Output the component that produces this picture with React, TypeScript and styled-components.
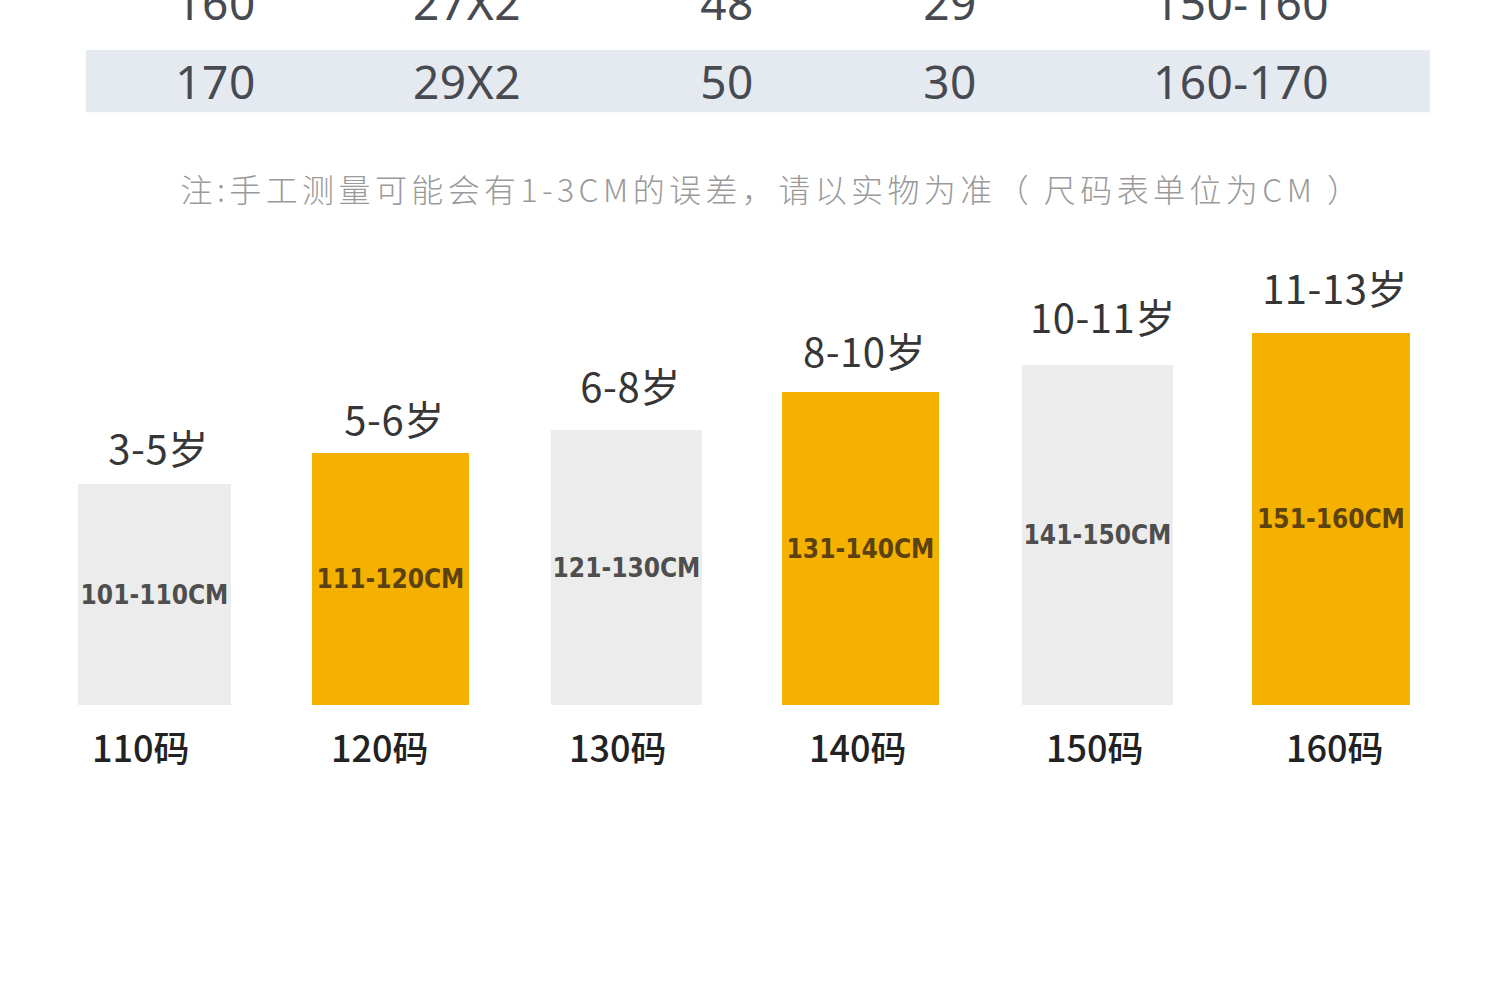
import styled, { createGlobalStyle } from "styled-components";

const GlobalStyle = createGlobalStyle`
  html, body {
    margin: 0;
    padding: 0;
    background: #ffffff;
    overflow: hidden;
  }
`;

const Page = styled.div`
  width: 1500px;
  height: 981px;
  background: #ffffff;
  font-family: "Noto Sans", "Noto Sans CJK SC", sans-serif;
`;

const SizeTable = styled.div`
  display: flex;
  flex-direction: column;
  gap: 17px;
  margin-top: -29px;
  padding: 0 70px 0 86px;
`;

const TableRow = styled.div<{ shaded: boolean }>`
  display: grid;
  grid-template-columns: 259px 244px 276px 170px 412px;
  height: 62px;
  background: ${(props) => (props.shaded ? "#e5e9f0" : "transparent")};
  box-shadow: ${(props) =>
    props.shaded ? "0 3px 4px -2px rgba(0, 0, 0, 0.04)" : "none"};
`;

const Cell = styled.span`
  text-align: center;
  font-family: "Noto Sans", sans-serif;
  font-size: 46px;
  line-height: 62px;
  letter-spacing: 0.5px;
  color: #474a50;
`;

const Note = styled.p`
  margin: 56px 0 0;
  padding-left: 44px;
  text-align: center;
  font-family: "Noto Sans CJK SC", sans-serif;
  font-weight: 300;
  font-size: 32px;
  line-height: 40px;
  letter-spacing: 4.4px;
  color: #9a9a9a;
  white-space: nowrap;
`;

const Chart = styled.div`
  display: flex;
  align-items: flex-end;
  height: 496px;
  margin-top: 61px;
  padding-left: 78px;
`;

const Column = styled.div<{ w: number; space: number }>`
  display: flex;
  flex-direction: column;
  width: ${(props) => props.w}px;
  margin-left: ${(props) => props.space}px;
`;

const AgeLabel = styled.div<{ gap: number }>`
  margin-bottom: ${(props) => props.gap}px;
  padding-left: 8px;
  text-align: center;
  font-family: "Noto Sans CJK SC", sans-serif;
  font-size: 40px;
  line-height: 38px;
  letter-spacing: 0.5px;
  color: #363636;
  white-space: nowrap;
`;

const Bar = styled.div<{ accent: boolean; h: number }>`
  display: flex;
  align-items: center;
  justify-content: center;
  height: ${(props) => props.h}px;
  background: ${(props) => (props.accent ? "#f5b100" : "#ececec")};
  font-family: "DejaVu Sans Condensed", "DejaVu Sans", sans-serif;
  font-stretch: condensed;
  font-weight: 700;
  font-size: 26px;
  color: ${(props) => (props.accent ? "#5c4210" : "#4e4e4e")};
  white-space: nowrap;
`;

const SizeLabel = styled.div<{ offset: number }>`
  margin-top: 22px;
  padding-left: ${(props) => props.offset}px;
  font-family: "Noto Sans CJK SC", sans-serif;
  font-weight: 500;
  font-size: 36px;
  line-height: 38px;
  color: #222222;
  white-space: nowrap;
`;

const rows = [
  ["160", "27X2", "48", "29", "150-160"],
  ["170", "29X2", "50", "30", "160-170"],
];

const sizes = [
  { age: "3-5岁", range: "101-110CM", size: "110码", w: 153, h: 221, space: 0, gap: 18, offset: 14, accent: false },
  { age: "5-6岁", range: "111-120CM", size: "120码", w: 157, h: 252, space: 81, gap: 16, offset: 19, accent: true },
  { age: "6-8岁", range: "121-130CM", size: "130码", w: 151, h: 275, space: 82, gap: 26, offset: 18, accent: false },
  { age: "8-10岁", range: "131-140CM", size: "140码", w: 157, h: 313, space: 80, gap: 23, offset: 27, accent: true },
  { age: "10-11岁", range: "141-150CM", size: "150码", w: 151, h: 340, space: 83, gap: 30, offset: 24, accent: false },
  { age: "11-13岁", range: "151-160CM", size: "160码", w: 158, h: 372, space: 79, gap: 27, offset: 34, accent: true },
];

export default function App() {
  return (
    <Page>
      <GlobalStyle />
      <SizeTable>
        {rows.map((row, i) => (
          <TableRow key={row[0]} shaded={i % 2 === 1}>
            {row.map((value, j) => (
              <Cell key={j}>{value}</Cell>
            ))}
          </TableRow>
        ))}
      </SizeTable>
      <Note>注:手工测量可能会有1-3CM的误差，请以实物为准（{"\u2009"}尺码表单位为CM{"\u2009"}）</Note>
      <Chart>
        {sizes.map((s) => (
          <Column key={s.size} w={s.w} space={s.space}>
            <AgeLabel gap={s.gap}>{s.age}</AgeLabel>
            <Bar accent={s.accent} h={s.h}>
              {s.range}
            </Bar>
            <SizeLabel offset={s.offset}>{s.size}</SizeLabel>
          </Column>
        ))}
      </Chart>
    </Page>
  );
}
